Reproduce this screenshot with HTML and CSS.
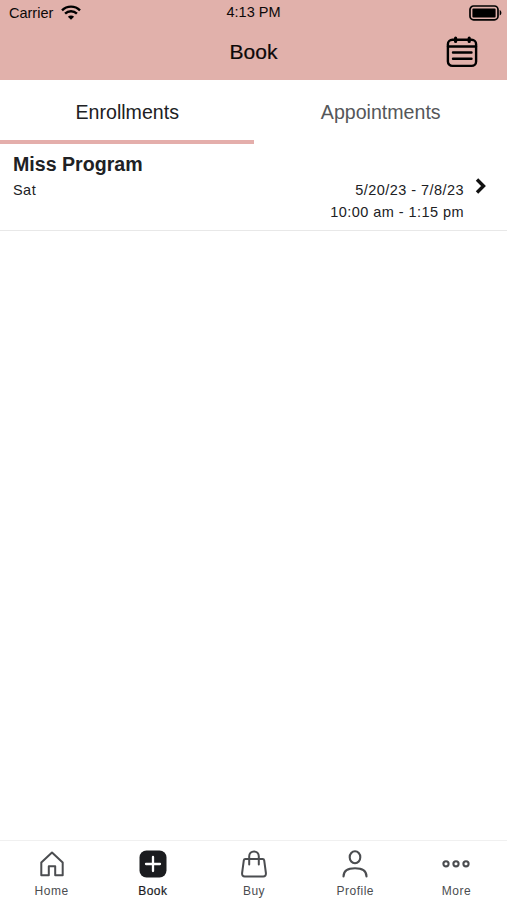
FILE: index.html
```html
<!DOCTYPE html>
<html lang="en">
<head>
    <meta charset="UTF-8">
    <title>Book</title>
    <meta name="viewport" content="width=device-width, initial-scale=1.0">
    <link rel="stylesheet" href="styles.css">
</head>
<body>
    <header class="header">
        <div class="status-bar">
            <div class="carrier">
                <span>Carrier</span>
                <svg width="20" height="15" viewBox="0 0 20 15" fill="none" stroke="#000" stroke-width="2.4">
                    <path d="M1 5.3a12.8 12.8 0 0 1 18 0M4.1 8.6a8.4 8.4 0 0 1 11.8 0"/>
                    <path d="M6.9 11.7a4.4 4.4 0 0 1 6.2 0L10 14.8z" fill="#000" stroke="none"/>
                </svg>
            </div>
            <span class="clock">4:13 PM</span>
            <svg class="battery" width="33" height="16" viewBox="0 0 33 16">
                <rect x="1" y="1" width="28" height="13.8" rx="3.6" fill="none" stroke="#000" stroke-width="1.7"/>
                <rect x="3.4" y="3.4" width="23.2" height="9" rx="1"/>
                <path d="M30.7 5v5.6c2.3-1 2.3-4.6 0-5.6z"/>
            </svg>
        </div>
        <div class="title-bar">
            <h1>Book</h1>
            <svg class="calendar" width="32" height="32" viewBox="0 0 32 32" fill="none" stroke="#000" stroke-width="2.4" stroke-linecap="round">
                <rect x="1.9" y="3.7" width="28.2" height="26.2" rx="4.5"/>
                <path d="M2 10.5h28M7 16.5h18.5M7 22.7h18.5"/>
                <path d="M9.6 2.2v3.2M23.2 2.2v3.2" stroke-width="3.2"/>
            </svg>
        </div>
    </header>

    <nav class="tabs">
        <a class="tab active">Enrollments</a>
        <a class="tab">Appointments</a>
    </nav>

    <main class="list">
        <div class="item">
            <div class="item-body">
                <h2>Miss Program</h2>
                <div class="item-row">
                    <span>Sat</span>
                    <div class="times">
                        <div>5/20/23 - 7/8/23</div>
                        <div>10:00 am - 1:15 pm</div>
                    </div>
                </div>
            </div>
            <svg class="chevron" width="12" height="18" viewBox="0 0 12 18" fill="none" stroke="#111" stroke-width="3.4">
                <path d="M2 2.5L8.500 9 2 15.500"/>
            </svg>
        </div>
    </main>

    <nav class="bottom-nav">
        <a class="nav-item">
            <svg width="28" height="28" viewBox="0 0 28 28" fill="none" stroke="#4b4d50" stroke-width="2" stroke-linejoin="round">
                <path d="M3.300 12.500L14 2.500l10.700 10v12.800h-7.500v-9h-6.400v9H3.300z"/>
            </svg>
            <span>Home</span>
        </a>
        <a class="nav-item active">
            <svg width="28" height="28" viewBox="0 0 28 28">
                <rect x=".5" y=".5" width="27" height="27" rx="7" fill="#1b1c1f"/>
                <path d="M14 7v14M7 14h14" stroke="#fff" stroke-width="2.300" stroke-linecap="round"/>
            </svg>
            <span>Book</span>
        </a>
        <a class="nav-item">
            <svg width="28" height="28" viewBox="0 0 28 28" fill="none" stroke="#4b4d50" stroke-width="2" stroke-linecap="round" stroke-linejoin="round">
                <path d="M5.300 9h17.400q1.300 0 1.500 1.300l1.700 12.700q.3 3.500-2.700 3.500H4.800q-3 0-2.700-3.500L3.800 10.300Q4 9 5.300 9z"/>
                <path d="M9.200 14.500V6.200a4.800 4.800 0 0 1 9.600 0v8.300"/>
            </svg>
            <span>Buy</span>
        </a>
        <a class="nav-item">
            <svg width="28" height="28" viewBox="0 0 28 28" fill="none" stroke="#4b4d50" stroke-width="2.100" stroke-linecap="round">
                <ellipse cx="14" cy="7.300" rx="5.300" ry="6"/>
                <path d="M2.500 26.500c0-5.500 4.200-8.200 11.500-8.200s11.500 2.700 11.500 8.200"/>
            </svg>
            <span>Profile</span>
        </a>
        <a class="nav-item">
            <svg width="28" height="28" viewBox="0 0 28 28" fill="none" stroke="#4b4d50" stroke-width="2.100">
                <circle cx="4" cy="13.800" r="2.600"/>
                <circle cx="14" cy="13.800" r="2.600"/>
                <circle cx="24" cy="13.800" r="2.600"/>
            </svg>
            <span>More</span>
        </a>
    </nav>
</body>
</html>
```
FILE: styles.css
```css
* { box-sizing: border-box; }
body { margin: 0; height: 100vh; display: flex; flex-direction: column; background: #fff; color: #202124; font-family: "Liberation Sans", Arial, sans-serif; }
svg { display: block; flex: none; }
h1, h2 { margin: 0; }

.header { height: 80px; background: #e1b1ab; color: #0c0808; }
.status-bar { display: grid; grid-template-columns: 1fr auto 1fr; align-items: center; height: 25px; padding: 0 5px 0 9px; font-size: 14.5px; }
.carrier { display: flex; align-items: center; gap: 8px; }
.clock { padding: 0 4px 2px 0; }
.battery { justify-self: end; }
.title-bar { display: grid; grid-template-columns: 1fr auto 1fr; align-items: center; height: 54px; padding: 0 29px; }
.title-bar h1 { grid-column: 2; font-size: 21px; font-weight: normal; -webkit-text-stroke: 0.2px; }
.calendar { justify-self: end; }

.tabs { display: flex; height: 64px; }
.tab { flex: 1; padding: 21px 0 0 1px; border-bottom: 4px solid transparent; text-align: center; font-size: 19.6px; line-height: 22px; color: #55575a; }
.tab.active { border-color: #e4aeab; color: #202124; }

.list { flex: 1; }
.item { display: flex; height: 87px; padding: 9px 20px 0 13px; border-bottom: 1px solid #e8e8e8; }
.item-body { flex: 1; }
.item h2 { font-size: 19.6px; line-height: 23px; }
.item-row { display: flex; justify-content: space-between; padding-top: 3px; font-size: 14.5px; line-height: 22px; letter-spacing: 0.45px; }
.times { text-align: right; }
.chevron { margin: 24px 0 0 11px; }

.bottom-nav { display: flex; height: 60px; padding-left: 1px; border-top: 1px solid #f0f0f0; }
.nav-item { flex: 1; display: flex; flex-direction: column; align-items: center; padding-top: 9px; font-size: 12px; line-height: 14px; letter-spacing: 0.5px; color: #4b4d50; }
.nav-item span { margin-top: 6px; }
.nav-item.active { color: #1b1c1f; -webkit-text-stroke: 0.2px #1b1c1f; }
```
